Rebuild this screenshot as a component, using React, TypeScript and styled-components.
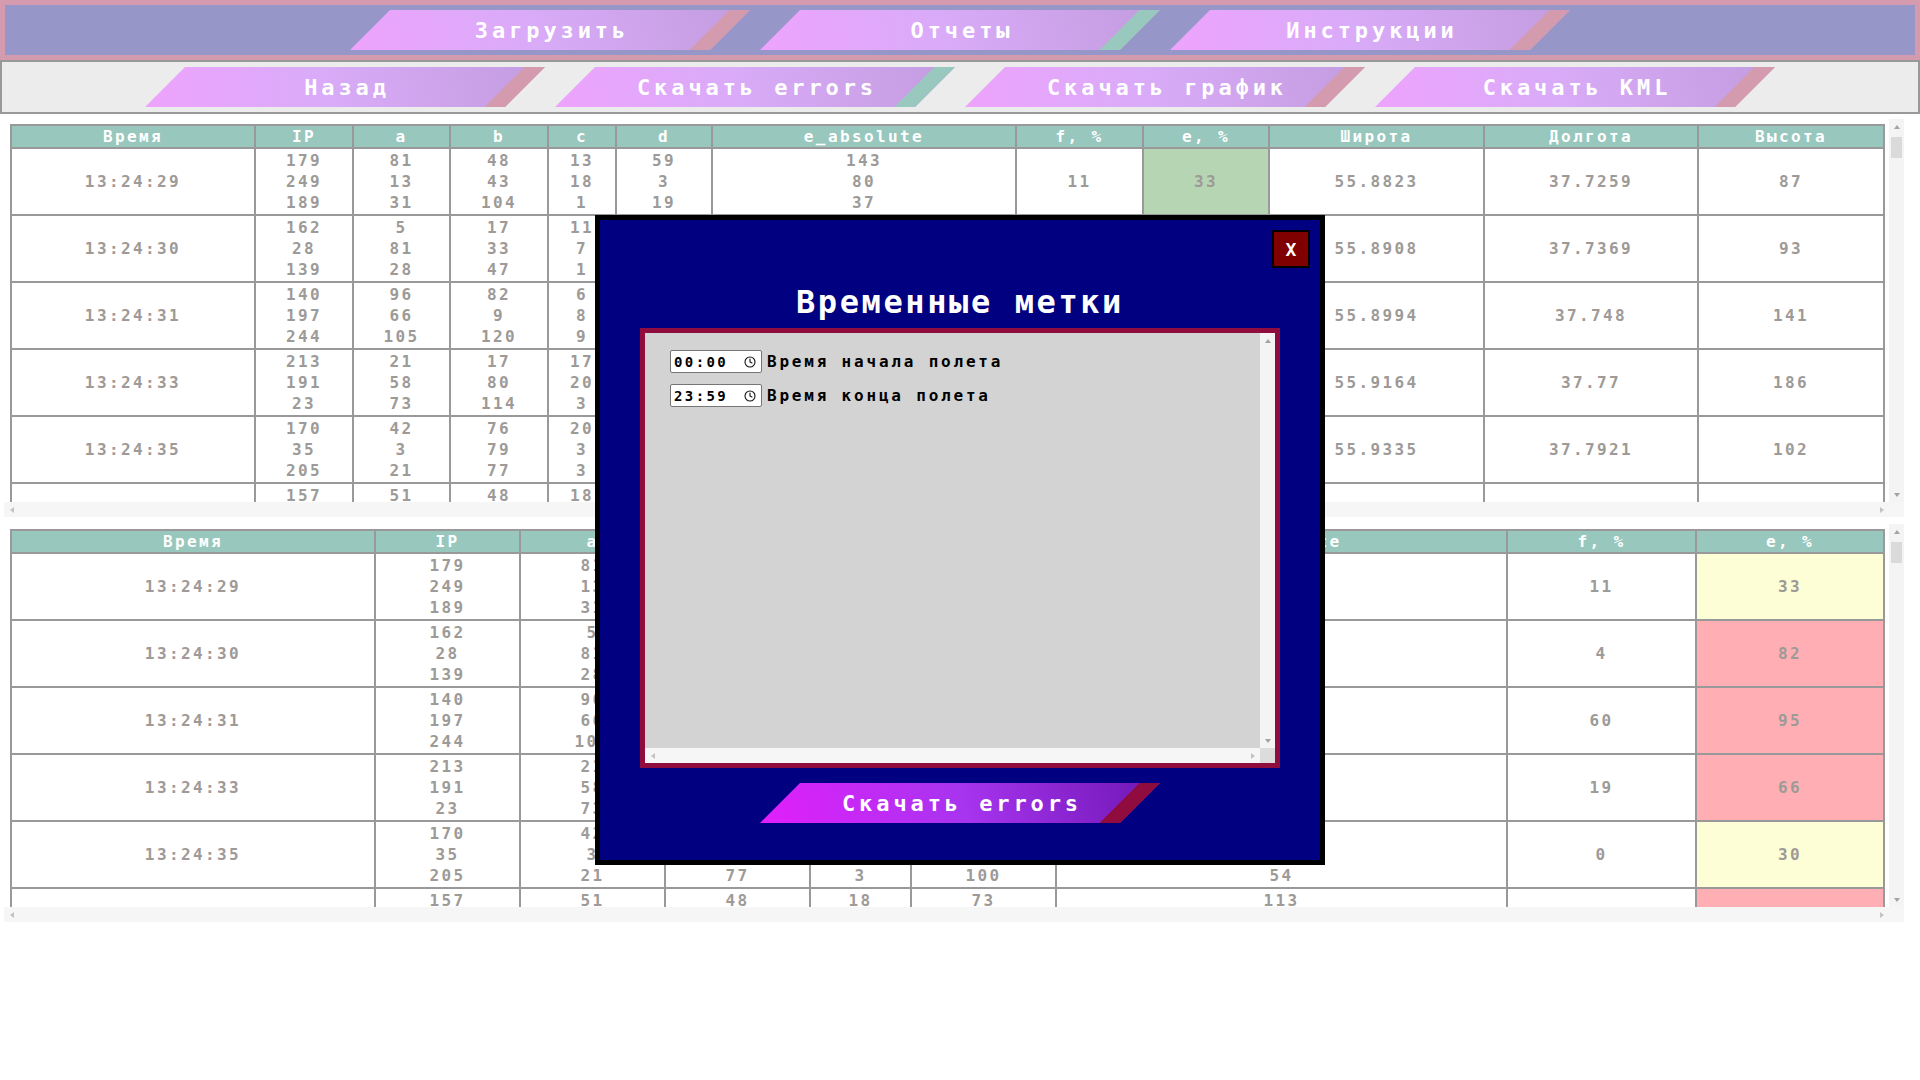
import styled, { createGlobalStyle } from "styled-components";
import { Clock } from "lucide-react";
import type { ReactNode } from "react";

const GlobalStyle = createGlobalStyle`
  html, body {
    margin: 0;
    padding: 0;
    background: #ffffff;
  }
  body {
    font-family: "DejaVu Sans Mono", "Liberation Mono", monospace;
  }
  * {
    box-sizing: border-box;
  }
`;

interface FlightRow {
  time: string;
  ip: number[];
  a: number[];
  b: number[];
  c: number[];
  d: number[];
  e: number[];
  f: number;
  err: number;
  lat: string;
  lon: string;
  alt: number;
}

const rows: FlightRow[] = [
  { time: "13:24:29", ip: [179, 249, 189], a: [81, 13, 31], b: [48, 43, 104], c: [13, 18, 1], d: [59, 3, 19], e: [143, 80, 37], f: 11, err: 33, lat: "55.8823", lon: "37.7259", alt: 87 },
  { time: "13:24:30", ip: [162, 28, 139], a: [5, 81, 28], b: [17, 33, 47], c: [11, 7, 1], d: [64, 90, 12], e: [121, 96, 48], f: 4, err: 82, lat: "55.8908", lon: "37.7369", alt: 93 },
  { time: "13:24:31", ip: [140, 197, 244], a: [96, 66, 105], b: [82, 9, 120], c: [6, 8, 9], d: [35, 71, 88], e: [77, 140, 151], f: 60, err: 95, lat: "55.8994", lon: "37.748", alt: 141 },
  { time: "13:24:33", ip: [213, 191, 23], a: [21, 58, 73], b: [17, 80, 114], c: [17, 20, 3], d: [44, 15, 92], e: [61, 108, 81], f: 19, err: 66, lat: "55.9164", lon: "37.77", alt: 186 },
  { time: "13:24:35", ip: [170, 35, 205], a: [42, 3, 21], b: [76, 79, 77], c: [20, 3, 3], d: [12, 58, 100], e: [91, 47, 54], f: 0, err: 30, lat: "55.9335", lon: "37.7921", alt: 102 },
  { time: "13:24:37", ip: [157, 64, 212], a: [51, 27, 88], b: [48, 16, 95], c: [18, 4, 12], d: [73, 29, 6], e: [113, 58, 74], f: 27, err: 71, lat: "55.9421", lon: "37.8033", alt: 118 },
];

type Tone = "plain" | "good" | "warn" | "bad";

const toneColor: Record<Tone, string> = {
  plain: "#ffffff",
  good: "#b6d6b3",
  warn: "#fefed6",
  bad: "#ffafb3",
};

const Page = styled.div`
  width: 1920px;
  min-height: 1080px;
  background: #ffffff;
`;

const TopBar = styled.nav`
  display: flex;
  justify-content: center;
  align-items: center;
  gap: 10px;
  height: 60px;
  background: #9696c8;
  border: 5px solid #d49bae;
`;

const SubBar = styled.div`
  display: flex;
  justify-content: center;
  align-items: center;
  gap: 10px;
  height: 54px;
  background: #ececec;
  border: 2px solid #999999;
`;

const SlantButton = styled.button<{ $fill: string; $stripe: string }>`
  flex: none;
  width: 400px;
  height: 40px;
  border: none;
  padding: 0 0 0 4px;
  clip-path: polygon(40px 0, 100% 0, calc(100% - 40px) 100%, 0 100%);
  background: linear-gradient(135deg, transparent 268.7px, ${(p) => p.$stripe} 268.7px),
    ${(p) => p.$fill};
  color: #ffffff;
  font-family: "DejaVu Sans Mono", "Liberation Mono", monospace;
  font-size: 22px;
  font-weight: 700;
  letter-spacing: 3.9px;
  cursor: pointer;
`;

const softFill = "linear-gradient(75deg, #eea3fd 0%, #d9abf8 45%, #c39cdf 100%)";
const brightFill = "linear-gradient(75deg, #e21ffb 0%, #a834ef 50%, #6e17b4 100%)";

const Main = styled.main`
  display: flex;
  flex-direction: column;
  gap: 7px;
  padding: 5px 0 0 4px;
`;

/* scroll frame: the headless browser hides native bars, so they are drawn */

const Frame = styled.div<{ $w: number; $h: number; $bg: string }>`
  display: grid;
  grid-template-columns: 1fr 15px;
  grid-template-rows: 1fr 15px;
  width: ${(p) => p.$w}px;
  height: ${(p) => p.$h}px;
  flex: none;
  background: ${(p) => p.$bg};
`;

const Viewport = styled.div<{ $pad: string }>`
  overflow: hidden;
  padding: ${(p) => p.$pad};
`;

const VBar = styled.div`
  display: flex;
  flex-direction: column;
  align-items: center;
  background: #f4f4f4;
`;

const HBar = styled.div`
  display: flex;
  align-items: center;
  justify-content: space-between;
  background: #f6f6f6;
`;

const Corner = styled.div<{ $bg: string }>`
  background: ${(p) => p.$bg};
`;

const BarButton = styled.div`
  flex: none;
  width: 15px;
  height: 15px;
  display: flex;
  align-items: center;
  justify-content: center;
`;

const BarGap = styled.div`
  flex: 1;
`;

const Thumb = styled.div`
  flex: none;
  width: 11px;
  height: 21px;
  margin-top: 3px;
  background: #dadada;
`;

type Dir = "up" | "down" | "left" | "right";

const Arrow = styled.span<{ $dir: Dir }>`
  width: 0;
  height: 0;
  border-style: solid;
  border-color: transparent;
  ${(p) =>
    p.$dir === "up"
      ? "border-width: 0 3.5px 4px; border-bottom-color: #a3a3a3;"
      : p.$dir === "down"
      ? "border-width: 4px 3.5px 0; border-top-color: #a3a3a3;"
      : p.$dir === "left"
      ? "border-width: 3.5px 4px 3.5px 0; border-right-color: #c3c3c3;"
      : "border-width: 3.5px 0 3.5px 4px; border-left-color: #c3c3c3;"}
`;

function ScrollFrame({
  w,
  h,
  bg,
  pad,
  thumb,
  children,
}: {
  w: number;
  h: number;
  bg: string;
  pad: string;
  thumb: boolean;
  children: ReactNode;
}) {
  return (
    <Frame $w={w} $h={h} $bg={bg}>
      <Viewport $pad={pad}>{children}</Viewport>
      <VBar>
        <BarButton>
          <Arrow $dir="up" />
        </BarButton>
        {thumb && <Thumb />}
        <BarGap />
        <BarButton>
          <Arrow $dir="down" />
        </BarButton>
      </VBar>
      <HBar>
        <BarButton>
          <Arrow $dir="left" />
        </BarButton>
        <BarButton>
          <Arrow $dir="right" />
        </BarButton>
      </HBar>
      <Corner $bg={thumb ? "#f6f6f6" : "#dcdcdc"} />
    </Frame>
  );
}

const Grid = styled.table`
  width: 1873px;
  border-collapse: collapse;
  table-layout: fixed;
  font-family: "DejaVu Sans Mono", "Liberation Mono", monospace;
  font-size: 16px;
  letter-spacing: 2.4px;
  text-align: center;
  color: #9d9a97;
`;

const Head = styled.th`
  padding: 0;
  line-height: 21px;
  background: #98c7bd;
  color: #ffffff;
  font-weight: 700;
  border: 2px solid #999999;
`;

const Cell = styled.td<{ $tone?: Tone }>`
  padding: 1px 0;
  line-height: 21px;
  font-weight: 700;
  vertical-align: middle;
  border: 2px solid #999999;
  background: ${(p) => toneColor[p.$tone ?? "plain"]};
`;

const Line = styled.div`
  height: 21px;
`;

const Modal = styled.section`
  position: fixed;
  top: 215px;
  left: 50%;
  transform: translateX(-50%);
  width: 730px;
  height: 650px;
  display: flex;
  flex-direction: column;
  align-items: center;
  background: #000080;
  border: 5px solid #000000;
`;

const CloseRow = styled.div`
  align-self: stretch;
  display: flex;
  justify-content: flex-end;
  padding: 10px 10px 0 0;
`;

const CloseButton = styled.button`
  width: 38px;
  height: 38px;
  padding: 0;
  background: #800000;
  border: 2px solid #000000;
  color: #ffffff;
  font-family: "DejaVu Sans Mono", "Liberation Mono", monospace;
  font-size: 18px;
  font-weight: 700;
`;

const Title = styled.h2`
  margin: 14px 0 0;
  font-size: 32px;
  line-height: 40px;
  letter-spacing: 2.6px;
  font-weight: 700;
  color: #ffffff;
`;

const Panel = styled.div`
  margin-top: 6px;
  flex: none;
  border: 5px solid #900c3f;
`;

const TimeList = styled.div`
  display: flex;
  flex-direction: column;
  gap: 11px;
`;

const TimeRow = styled.label`
  display: flex;
  align-items: center;
  gap: 5px;
`;

const TimeBox = styled.span`
  display: flex;
  align-items: center;
  justify-content: space-between;
  width: 92px;
  height: 23px;
  padding: 0 5px 0 3px;
  background: #ffffff;
  border: 1px solid #767676;
  border-radius: 2px;
  font-size: 14px;
  font-weight: 700;
  letter-spacing: 2.4px;
  color: #000000;
`;

const TimeLabel = styled.span`
  font-size: 16px;
  font-weight: 700;
  letter-spacing: 2.8px;
  color: #000000;
`;

const ModalAction = styled(SlantButton)`
  margin-top: 15px;
`;

const multi = (values: number[]) => values.map((v, i) => <Line key={i}>{v}</Line>);

const wideCols = [244, 98, 97, 98, 68, 96, 304, 127, 126, 215, 214, 186];
const wideHeads = ["Время", "IP", "a", "b", "c", "d", "e_absolute", "f, %", "e, %", "Широта", "Долгота", "Высота"];

const shortCols = [364, 145, 145, 145, 101, 145, 451, 189, 188];
const shortHeads = wideHeads.slice(0, 9);

function FlightTable({ full }: { full: boolean }) {
  const cols = full ? wideCols : shortCols;
  const heads = full ? wideHeads : shortHeads;
  return (
    <Grid>
      <colgroup>
        {cols.map((w, i) => (
          <col key={i} style={{ width: w }} />
        ))}
      </colgroup>
      <thead>
        <tr>
          {heads.map((h) => (
            <Head key={h}>{h}</Head>
          ))}
        </tr>
      </thead>
      <tbody>
        {rows.map((r, i) => {
          const tone: Tone = full
            ? r.err < 50
              ? "good"
              : "bad"
            : r.err < 50
            ? "warn"
            : "bad";
          return (
            <tr key={i}>
              <Cell>{r.time}</Cell>
              <Cell>{multi(r.ip)}</Cell>
              <Cell>{multi(r.a)}</Cell>
              <Cell>{multi(r.b)}</Cell>
              <Cell>{multi(r.c)}</Cell>
              <Cell>{multi(r.d)}</Cell>
              <Cell>{multi(r.e)}</Cell>
              <Cell>{r.f}</Cell>
              <Cell $tone={tone}>{r.err}</Cell>
              {full && (
                <>
                  <Cell>{r.lat}</Cell>
                  <Cell>{r.lon}</Cell>
                  <Cell>{r.alt}</Cell>
                </>
              )}
            </tr>
          );
        })}
      </tbody>
    </Grid>
  );
}

export default function App() {
  return (
    <Page>
      <GlobalStyle />
      <TopBar>
        <SlantButton $fill={softFill} $stripe="#d49bae">Загрузить</SlantButton>
        <SlantButton $fill={softFill} $stripe="#98c8be">Отчеты</SlantButton>
        <SlantButton $fill={softFill} $stripe="#d49bae">Инструкции</SlantButton>
      </TopBar>
      <SubBar>
        <SlantButton $fill={softFill} $stripe="#d49bae">Назад</SlantButton>
        <SlantButton $fill={softFill} $stripe="#98c8be">Скачать errors</SlantButton>
        <SlantButton $fill={softFill} $stripe="#d49bae">Скачать график</SlantButton>
        <SlantButton $fill={softFill} $stripe="#d49bae">Скачать KML</SlantButton>
      </SubBar>
      <Main>
        <ScrollFrame w={1900} h={398} bg="#ffffff" pad="5px 0 0 6px" thumb>
          <FlightTable full />
        </ScrollFrame>
        <ScrollFrame w={1900} h={398} bg="#ffffff" pad="5px 0 0 6px" thumb>
          <FlightTable full={false} />
        </ScrollFrame>
      </Main>
      <Modal>
        <CloseRow>
          <CloseButton>X</CloseButton>
        </CloseRow>
        <Title>Временные метки</Title>
        <Panel>
          <ScrollFrame w={630} h={430} bg="#d3d3d3" pad="17px 25px" thumb={false}>
            <TimeList>
              <TimeRow>
                <TimeBox>
                  00:00
                  <Clock size={12} strokeWidth={2.2} color="#111" />
                </TimeBox>
                <TimeLabel>Время начала полета</TimeLabel>
              </TimeRow>
              <TimeRow>
                <TimeBox>
                  23:59
                  <Clock size={12} strokeWidth={2.2} color="#111" />
                </TimeBox>
                <TimeLabel>Время конца полета</TimeLabel>
              </TimeRow>
            </TimeList>
          </ScrollFrame>
        </Panel>
        <ModalAction $fill={brightFill} $stripe="#900c3f">
          Скачать errors
        </ModalAction>
      </Modal>
    </Page>
  );
}
